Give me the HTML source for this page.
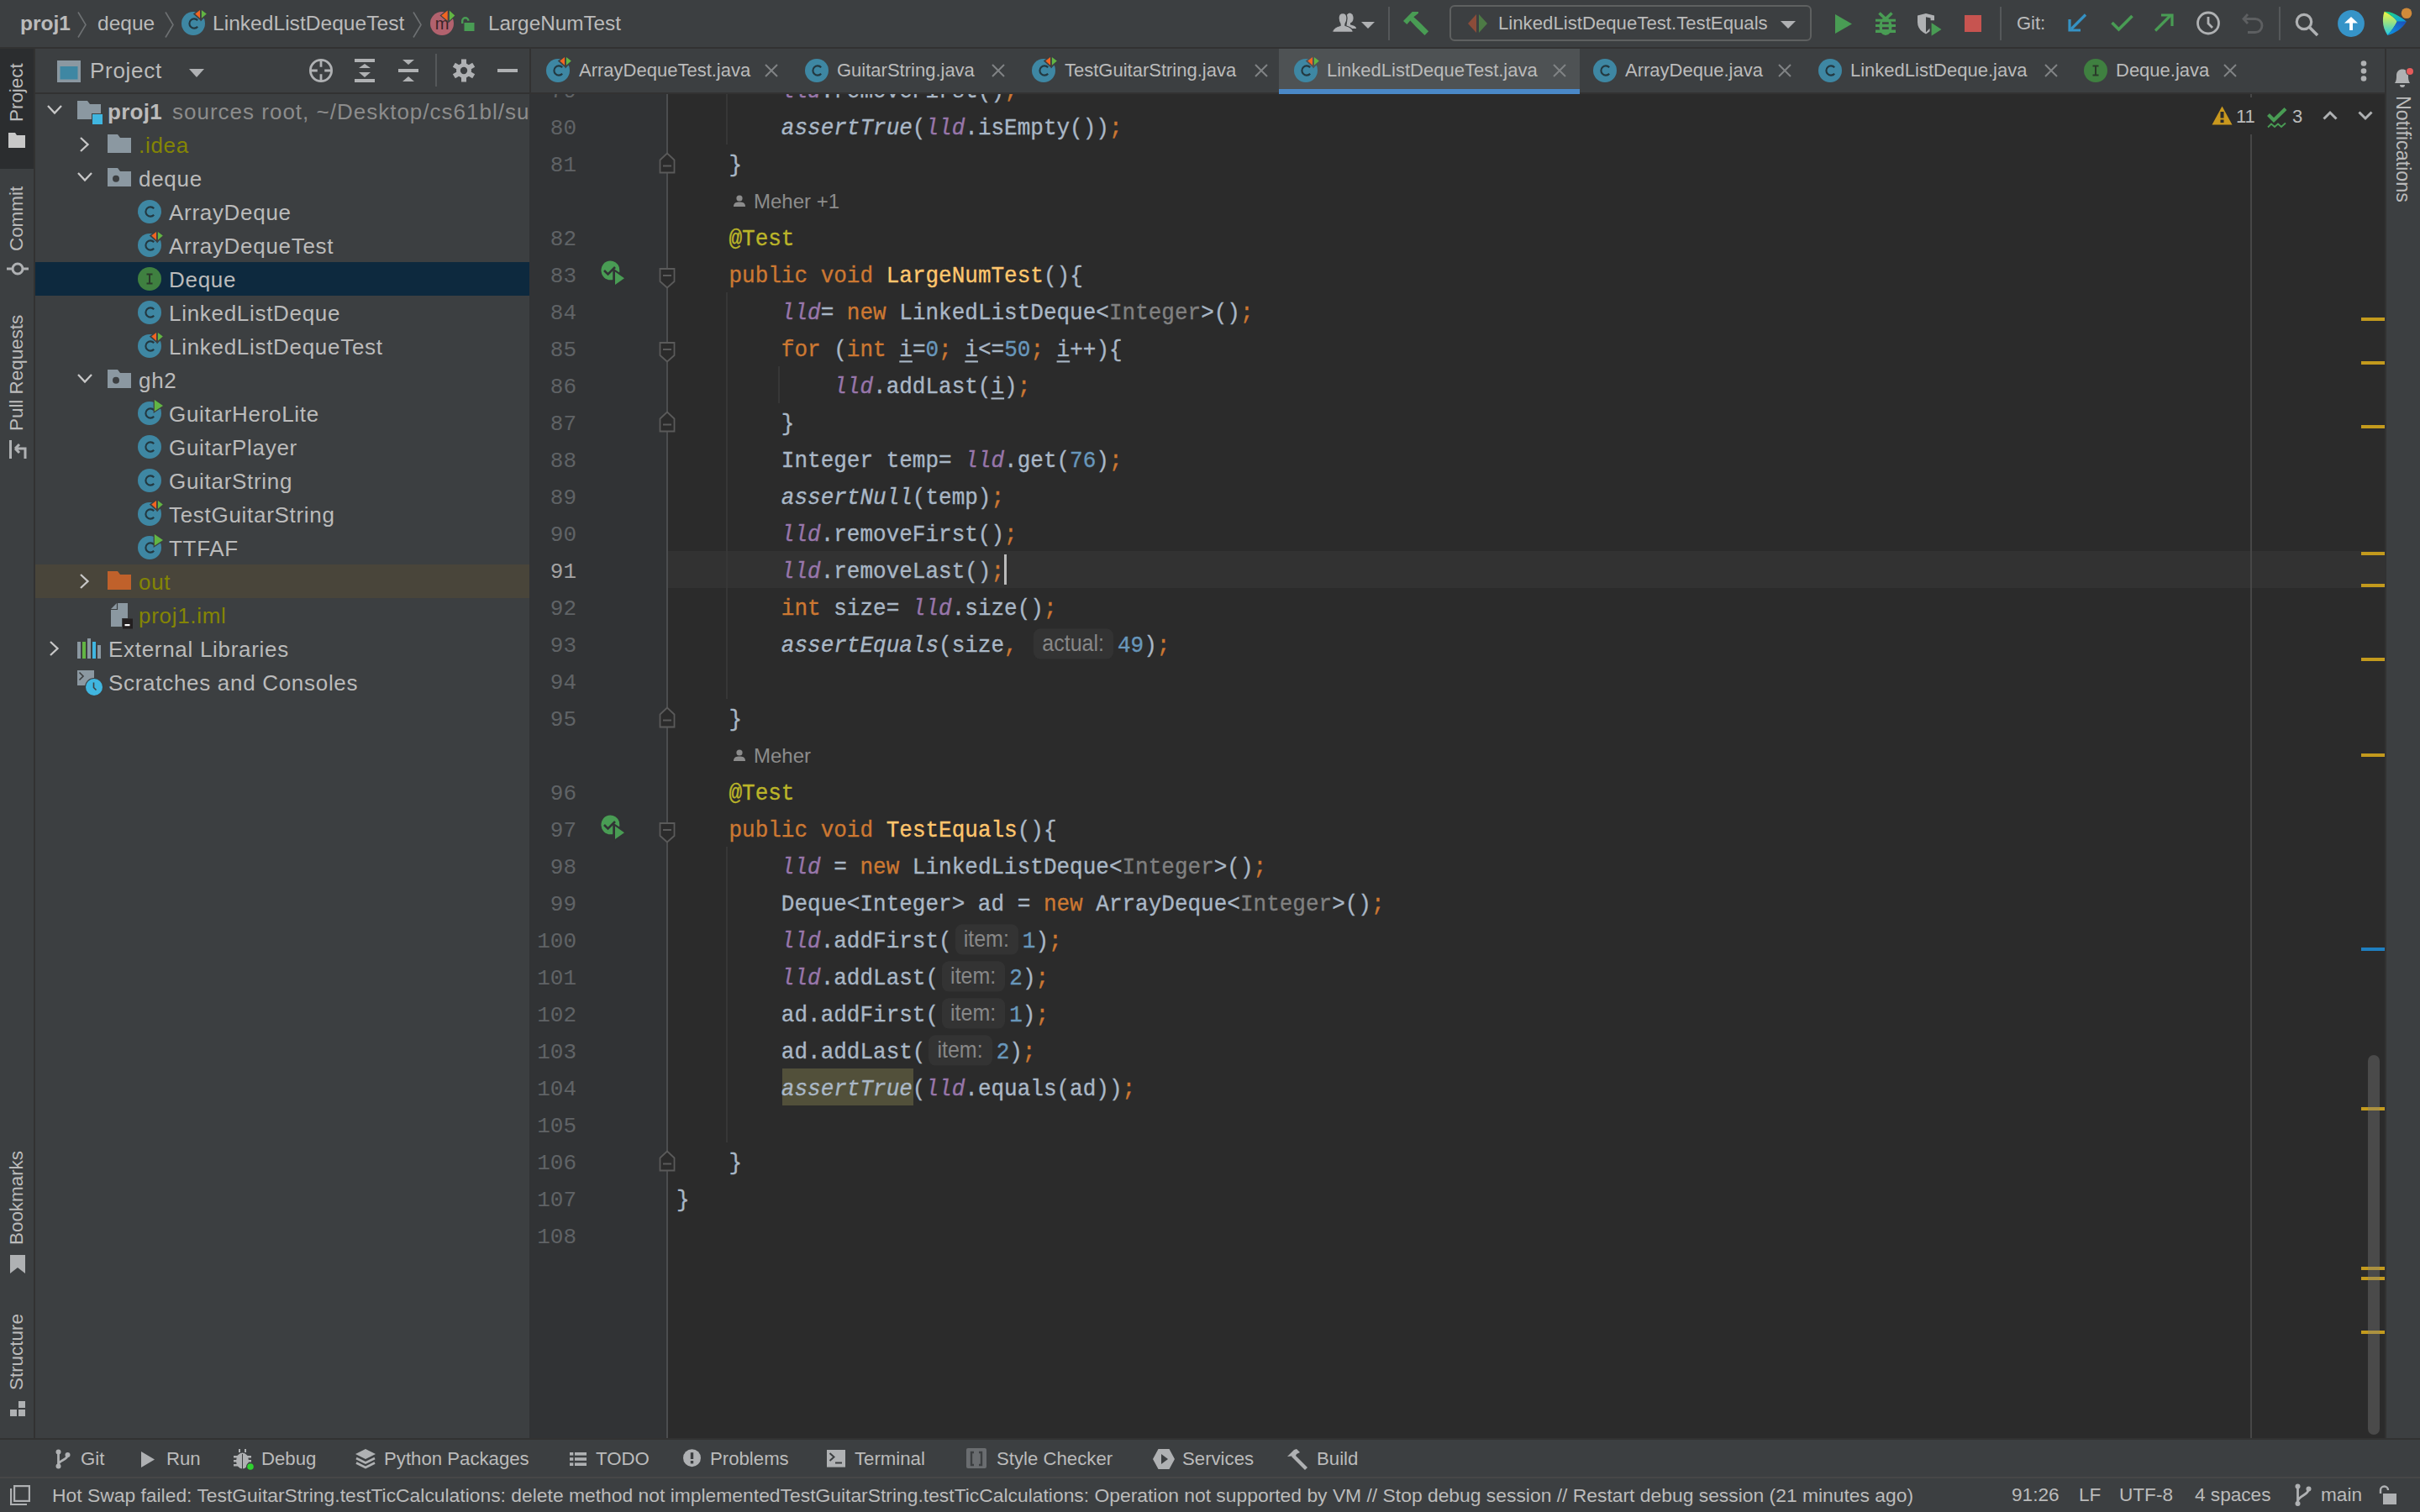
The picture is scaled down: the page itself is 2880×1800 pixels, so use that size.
<!DOCTYPE html>
<html><head><meta charset="utf-8">
<style>
*{margin:0;padding:0;box-sizing:border-box}
html,body{width:2880px;height:1800px;overflow:hidden;background:#3c3f41;font-family:"Liberation Sans",sans-serif;color:#bbbbbb}
.a{position:absolute}
.s{position:absolute;white-space:pre}
svg{position:absolute;overflow:visible}
/* regions */
#topbar{left:0;top:0;width:2880px;height:56px;background:#3c3f41}
#b1{left:0;top:56px;width:2880px;height:2px;background:#323232}
#lstrip{left:0;top:58px;width:40px;height:1654px;background:#3c3f41}
#lstripb{left:40px;top:58px;width:2px;height:1654px;background:#323232}
#psel{left:0;top:58px;width:40px;height:143px;background:#2b2d2f}
#panel{left:42px;top:58px;width:588px;height:1654px;background:#3c3f41}
#phb{left:42px;top:110px;width:588px;height:2px;background:#323232}
#pb{left:630px;top:58px;width:2px;height:52px;background:#323232}
#tabs{left:632px;top:58px;width:2206px;height:52px;background:#3c3f41}
#tabsb{left:630px;top:110px;width:2208px;height:2px;background:#323232}
#gutter{left:630px;top:112px;width:163px;height:1600px;background:#313335}
#foldl{left:793px;top:112px;width:2px;height:1600px;background:#4b4d4f}
#editor{left:795px;top:112px;width:2043px;height:1600px;background:#2b2b2b;overflow:hidden}
#nstrip{left:2838px;top:58px;width:42px;height:1654px;background:#3c3f41}
#nstripb{left:2838px;top:58px;width:2px;height:1654px;background:#323232}
#bb1{left:0;top:1712px;width:2880px;height:2px;background:#323232}
#btool{left:0;top:1714px;width:2880px;height:44px;background:#3c3f41}
#bb2{left:0;top:1758px;width:2880px;height:2px;background:#474747}
#status{left:0;top:1760px;width:2880px;height:40px;background:#3c3f41}

/* code */
.ln{position:absolute;left:632px;width:54px;text-align:right;font-family:"Liberation Mono",monospace;font-size:26px;line-height:44px;color:#606366;white-space:pre}
.cl{position:absolute;left:10px;font-family:"Liberation Mono",monospace;font-size:26px;line-height:44px;color:#a9b7c6;white-space:pre;-webkit-text-stroke:0.35px currentColor;transform:scaleY(1.07);transform-origin:0 29px}
.k{color:#cc7832}.n{color:#6897bb}.an{color:#bbb529}.md{color:#ffc66d}
.sf{color:#9876aa;font-style:italic}.it{font-style:italic}.g{color:#808080}
.u{text-decoration:underline;text-underline-offset:5px;text-decoration-thickness:2px}
.inl{-webkit-text-stroke:0;display:inline-block;font-family:"Liberation Sans",sans-serif;font-size:25px;color:#878787;background:#333333;border-radius:8px;height:34px;line-height:32px;vertical-align:top;margin-top:3px;padding:0 11px 0 10px;margin-left:4px;margin-right:5px;font-style:normal}
.tree{position:absolute;font-size:26px;letter-spacing:0.7px;line-height:40px;white-space:pre;color:#bbbbbb}
.tab{position:absolute;font-size:22px;line-height:51px;top:58px;white-space:pre;color:#bbbbbb}
.bt{position:absolute;font-size:22.2px;line-height:45px;top:1714px;white-space:pre;color:#bbbbbb}
.st{position:absolute;font-size:22.6px;line-height:40px;top:1760px;white-space:pre;color:#bbbbbb}
.vt{position:absolute;font-size:22.4px;white-space:pre;color:#bbbbbb;transform-origin:0 0}
</style></head><body>
<div id="topbar" class="a"></div>
<div id="b1" class="a"></div>
<div id="lstrip" class="a"></div>
<div id="psel" class="a"></div>
<div id="lstripb" class="a"></div>
<div id="panel" class="a"></div>
<div id="phb" class="a"></div>
<div id="pb" class="a"></div>
<div id="tabs" class="a"></div>
<div id="tabsb" class="a"></div>
<div id="gutter" class="a"></div>
<div id="foldl" class="a"></div>
<div id="editor" class="a">
<!--EDITOR-->
<div class="a" style="left:0;top:544px;width:2043px;height:44px;background:#323232"></div>
<div class="a" style="left:1883px;top:48px;width:2px;height:1560px;background:#474747"></div>
<div class="a" style="left:1883px;top:0px;width:2px;height:4px;background:#474747"></div>
<div class="a" style="left:69px;top:0;width:2px;height:60px;background:#373737"></div>
<div class="a" style="left:69px;top:236px;width:2px;height:484px;background:#373737"></div>
<div class="a" style="left:131px;top:324px;width:2px;height:44px;background:#373737"></div>
<div class="a" style="left:69px;top:896px;width:2px;height:352px;background:#373737"></div>
<div class="a" style="left:136px;top:1160px;width:156px;height:44px;background:#52503a"></div>
<div class="cl" style="top:-25.5px">        <span class="sf">lld</span>.removeFirst()<span class="k">;</span></div>
<div class="cl" style="top:18.5px">        <span class="it">assertTrue</span>(<span class="sf">lld</span>.isEmpty())<span class="k">;</span></div>
<div class="cl" style="top:62.5px">    }</div>
<div class="s" style="left:102px;top:106px;font-size:24px;line-height:44px;color:#8c8c8c">Meher +1</div>
<svg style="left:77px;top:119px" width="16" height="16" viewBox="0 0 16 16"><circle cx="8" cy="5" r="3.6" fill="#8c8c8c"/><path d="M1 15 C1 10.5 4 9.5 8 9.5 C12 9.5 15 10.5 15 15 Z" fill="#8c8c8c"/></svg>
<div class="cl" style="top:150.5px">    <span class="an">@Test</span></div>
<div class="cl" style="top:194.5px">    <span class="k">public</span> <span class="k">void</span> <span class="md">LargeNumTest</span>(){</div>
<div class="cl" style="top:238.5px">        <span class="sf">lld</span>= <span class="k">new</span> LinkedListDeque&lt;<span class="g">Integer</span>&gt;()<span class="k">;</span></div>
<div class="cl" style="top:282.5px">        <span class="k">for</span> (<span class="k">int</span> <span class="u">i</span>=<span class="n">0</span><span class="k">;</span> <span class="u">i</span>&lt;=<span class="n">50</span><span class="k">;</span> <span class="u">i</span>++){</div>
<div class="cl" style="top:326.5px">            <span class="sf">lld</span>.addLast(<span class="u">i</span>)<span class="k">;</span></div>
<div class="cl" style="top:370.5px">        }</div>
<div class="cl" style="top:414.5px">        Integer temp= <span class="sf">lld</span>.get(<span class="n">76</span>)<span class="k">;</span></div>
<div class="cl" style="top:458.5px">        <span class="it">assertNull</span>(temp)<span class="k">;</span></div>
<div class="cl" style="top:502.5px">        <span class="sf">lld</span>.removeFirst()<span class="k">;</span></div>
<div class="cl" style="top:546.5px">        <span class="sf">lld</span>.removeLast()<span class="k">;</span></div>
<div class="cl" style="top:590.5px">        <span class="k">int</span> size= <span class="sf">lld</span>.size()<span class="k">;</span></div>
<div class="cl" style="top:634.5px">        <span class="it">assertEquals</span>(size<span class="k">,</span> <span class="inl">actual:</span><span class="n">49</span>)<span class="k">;</span></div>
<div class="cl" style="top:722.5px">    }</div>
<div class="s" style="left:102px;top:766px;font-size:24px;line-height:44px;color:#8c8c8c">Meher</div>
<svg style="left:77px;top:779px" width="16" height="16" viewBox="0 0 16 16"><circle cx="8" cy="5" r="3.6" fill="#8c8c8c"/><path d="M1 15 C1 10.5 4 9.5 8 9.5 C12 9.5 15 10.5 15 15 Z" fill="#8c8c8c"/></svg>
<div class="cl" style="top:810.5px">    <span class="an">@Test</span></div>
<div class="cl" style="top:854.5px">    <span class="k">public</span> <span class="k">void</span> <span class="md">TestEquals</span>(){</div>
<div class="cl" style="top:898.5px">        <span class="sf">lld</span> = <span class="k">new</span> LinkedListDeque&lt;<span class="g">Integer</span>&gt;()<span class="k">;</span></div>
<div class="cl" style="top:942.5px">        Deque&lt;Integer&gt; ad = <span class="k">new</span> ArrayDeque&lt;<span class="g">Integer</span>&gt;()<span class="k">;</span></div>
<div class="cl" style="top:986.5px">        <span class="sf">lld</span>.addFirst(<span class="inl">item:</span><span class="n">1</span>)<span class="k">;</span></div>
<div class="cl" style="top:1030.5px">        <span class="sf">lld</span>.addLast(<span class="inl">item:</span><span class="n">2</span>)<span class="k">;</span></div>
<div class="cl" style="top:1074.5px">        ad.addFirst(<span class="inl">item:</span><span class="n">1</span>)<span class="k">;</span></div>
<div class="cl" style="top:1118.5px">        ad.addLast(<span class="inl">item:</span><span class="n">2</span>)<span class="k">;</span></div>
<div class="cl" style="top:1162.5px">        <span class="it hl">assertTrue</span>(<span class="sf">lld</span>.equals(ad))<span class="k">;</span></div>
<div class="cl" style="top:1250.5px">    }</div>
<div class="cl" style="top:1294.5px">}</div>
<div class="a" style="left:400px;top:548px;width:3px;height:36px;background:#bbbbbb"></div>
<svg style="left:1837px;top:14px" width="25" height="23" viewBox="0 0 25 23"><path d="M12.5 0.5 L24.5 22.5 H0.5 Z" fill="#c9981e"/><rect x="10.5" y="7" width="4" height="7.5" fill="#2b2b2b"/><rect x="10.5" y="16.5" width="4" height="3.6" fill="#2b2b2b"/></svg>
<div class="s" style="left:1866px;top:10px;font-size:22px;line-height:34px;color:#bbbbbb">11</div>
<svg style="left:1903px;top:15px" width="24" height="26" viewBox="0 0 24 26"><path d="M1.5 9.5 L8 16 L22 2.5" fill="none" stroke="#499c54" stroke-width="4.2"/><path d="M1 24.5 L5 20.5 L9 24 L13 20.5 L17 24 L22 19.5" fill="none" stroke="#499c54" stroke-width="1.8"/></svg>
<div class="s" style="left:1933px;top:10px;font-size:22px;line-height:34px;color:#bbbbbb">3</div>
<svg style="left:1969px;top:20px" width="18" height="11" viewBox="0 0 18 11"><path d="M1.5 9.5 L9 2 L16.5 9.5" fill="none" stroke="#afb1b3" stroke-width="3"/></svg>
<svg style="left:2011px;top:20px" width="18" height="11" viewBox="0 0 18 11"><path d="M1.5 1.5 L9 9 L16.5 1.5" fill="none" stroke="#afb1b3" stroke-width="3"/></svg>
<div class="a" style="left:2015px;top:266px;width:28px;height:4px;background:#c39a1d"></div>
<div class="a" style="left:2015px;top:318px;width:28px;height:4px;background:#c39a1d"></div>
<div class="a" style="left:2015px;top:394px;width:28px;height:4px;background:#c39a1d"></div>
<div class="a" style="left:2015px;top:545px;width:28px;height:4px;background:#c39a1d"></div>
<div class="a" style="left:2015px;top:583px;width:28px;height:4px;background:#c39a1d"></div>
<div class="a" style="left:2015px;top:671px;width:28px;height:4px;background:#c39a1d"></div>
<div class="a" style="left:2015px;top:785px;width:28px;height:4px;background:#c39a1d"></div>
<div class="a" style="left:2015px;top:1206px;width:28px;height:4px;background:#c39a1d"></div>
<div class="a" style="left:2015px;top:1396px;width:28px;height:4px;background:#c39a1d"></div>
<div class="a" style="left:2015px;top:1408px;width:28px;height:4px;background:#c39a1d"></div>
<div class="a" style="left:2015px;top:1472px;width:28px;height:4px;background:#c39a1d"></div>
<div class="a" style="left:2015px;top:1016px;width:28px;height:4px;background:#1f7fc0"></div>
<div class="a" style="left:2023px;top:1144px;width:14px;height:452px;border-radius:7px;background:rgba(128,128,128,0.365)"></div>
<!--/EDITOR-->
</div>
<div id="nstrip" class="a"></div>
<div id="nstripb" class="a"></div>
<div id="bb1" class="a"></div>
<div id="btool" class="a"></div>
<div id="bb2" class="a"></div>
<div id="status" class="a"></div>
<div class="a" style="left:0;top:112px;width:830px;height:1600px;overflow:hidden"><div class="a" style="left:0;top:-112px;width:830px;height:1800px">
<!--LINENUMS-->
<div class="ln" style="top:87px">79</div>
<div class="ln" style="top:131px;color:#606366">80</div>
<div class="ln" style="top:175px;color:#606366">81</div>
<div class="ln" style="top:263px;color:#606366">82</div>
<div class="ln" style="top:307px;color:#606366">83</div>
<div class="ln" style="top:351px;color:#606366">84</div>
<div class="ln" style="top:395px;color:#606366">85</div>
<div class="ln" style="top:439px;color:#606366">86</div>
<div class="ln" style="top:483px;color:#606366">87</div>
<div class="ln" style="top:527px;color:#606366">88</div>
<div class="ln" style="top:571px;color:#606366">89</div>
<div class="ln" style="top:615px;color:#606366">90</div>
<div class="ln" style="top:659px;color:#a4a3a3">91</div>
<div class="ln" style="top:703px;color:#606366">92</div>
<div class="ln" style="top:747px;color:#606366">93</div>
<div class="ln" style="top:791px;color:#606366">94</div>
<div class="ln" style="top:835px;color:#606366">95</div>
<div class="ln" style="top:923px;color:#606366">96</div>
<div class="ln" style="top:967px;color:#606366">97</div>
<div class="ln" style="top:1011px;color:#606366">98</div>
<div class="ln" style="top:1055px;color:#606366">99</div>
<div class="ln" style="top:1099px;color:#606366">100</div>
<div class="ln" style="top:1143px;color:#606366">101</div>
<div class="ln" style="top:1187px;color:#606366">102</div>
<div class="ln" style="top:1231px;color:#606366">103</div>
<div class="ln" style="top:1275px;color:#606366">104</div>
<div class="ln" style="top:1319px;color:#606366">105</div>
<div class="ln" style="top:1363px;color:#606366">106</div>
<div class="ln" style="top:1407px;color:#606366">107</div>
<div class="ln" style="top:1451px;color:#606366">108</div>
<svg style="left:784px;top:181px" width="20" height="26" viewBox="0 0 20 26"><path d="M1.5 24.5 H18.5 V9.5 L10 1.5 L1.5 9.5 Z" fill="#2b2b2b" stroke="#5a5a5a" stroke-width="1.8"/><rect x="5" y="15.5" width="10" height="2" fill="#5a5a5a"/></svg>
<svg style="left:784px;top:489px" width="20" height="26" viewBox="0 0 20 26"><path d="M1.5 24.5 H18.5 V9.5 L10 1.5 L1.5 9.5 Z" fill="#2b2b2b" stroke="#5a5a5a" stroke-width="1.8"/><rect x="5" y="15.5" width="10" height="2" fill="#5a5a5a"/></svg>
<svg style="left:784px;top:841px" width="20" height="26" viewBox="0 0 20 26"><path d="M1.5 24.5 H18.5 V9.5 L10 1.5 L1.5 9.5 Z" fill="#2b2b2b" stroke="#5a5a5a" stroke-width="1.8"/><rect x="5" y="15.5" width="10" height="2" fill="#5a5a5a"/></svg>
<svg style="left:784px;top:1369px" width="20" height="26" viewBox="0 0 20 26"><path d="M1.5 24.5 H18.5 V9.5 L10 1.5 L1.5 9.5 Z" fill="#2b2b2b" stroke="#5a5a5a" stroke-width="1.8"/><rect x="5" y="15.5" width="10" height="2" fill="#5a5a5a"/></svg>
<svg style="left:784px;top:319px" width="20" height="25" viewBox="0 0 20 25"><path d="M1.5 1 H18.5 V16 L10 23.5 L1.5 16 Z" fill="#2b2b2b" stroke="#5a5a5a" stroke-width="1.8"/><rect x="5" y="8" width="10" height="2" fill="#5a5a5a"/></svg>
<svg style="left:784px;top:407px" width="20" height="25" viewBox="0 0 20 25"><path d="M1.5 1 H18.5 V16 L10 23.5 L1.5 16 Z" fill="#2b2b2b" stroke="#5a5a5a" stroke-width="1.8"/><rect x="5" y="8" width="10" height="2" fill="#5a5a5a"/></svg>
<svg style="left:784px;top:979px" width="20" height="25" viewBox="0 0 20 25"><path d="M1.5 1 H18.5 V16 L10 23.5 L1.5 16 Z" fill="#2b2b2b" stroke="#5a5a5a" stroke-width="1.8"/><rect x="5" y="8" width="10" height="2" fill="#5a5a5a"/></svg>
<svg style="left:715px;top:311px" width="30" height="30" viewBox="0 0 30 30"><path d="M22 8.5 A10.8 10.8 0 1 0 15 20.5" fill="#499c54"/><circle cx="11.5" cy="11.5" r="10.8" fill="#499c54"/><path d="M15.5 10.5 L30 20.3 L15.5 30 Z" fill="#313335" stroke="#313335" stroke-width="2.5"/><path d="M17 12.6 L28 20.3 L17 27.9 Z" fill="#499c54"/><path d="M4 11 L8.5 15.5 L17 7" fill="none" stroke="#313335" stroke-width="2.6"/></svg>
<svg style="left:715px;top:971px" width="30" height="30" viewBox="0 0 30 30"><path d="M22 8.5 A10.8 10.8 0 1 0 15 20.5" fill="#499c54"/><circle cx="11.5" cy="11.5" r="10.8" fill="#499c54"/><path d="M15.5 10.5 L30 20.3 L15.5 30 Z" fill="#313335" stroke="#313335" stroke-width="2.5"/><path d="M17 12.6 L28 20.3 L17 27.9 Z" fill="#499c54"/><path d="M4 11 L8.5 15.5 L17 7" fill="none" stroke="#313335" stroke-width="2.6"/></svg>
<!--/LINENUMS-->
</div></div>
<!--TREE-->
<div class="a" style="left:42px;top:312px;width:588px;height:40px;background:#0d293e"></div>
<div class="a" style="left:42px;top:672px;width:588px;height:40px;background:#49453a"></div>
<svg style="left:56px;top:125px" width="18" height="12" viewBox="0 0 18 12"><path d="M1 1 L9 9.5 L17 1" fill="none" stroke="#c8c8c8" stroke-width="2.3"/></svg>
<svg style="left:92px;top:120px" width="30" height="30" viewBox="0 0 30 30"><path d="M0 0 H12 L15 4 H28 V22 H0 Z" fill="#8b98a1"/><rect x="17" y="15" width="14" height="14" fill="#3c3f41"/><rect x="18" y="16" width="12" height="12" fill="#40b6e0"/></svg>
<div class="tree" style="left:128px;top:113px;"><b style="letter-spacing:0.3px">proj1</b></div>
<div class="tree" style="left:205px;top:113px;color:#8c8c8c;width:425px;overflow:hidden;letter-spacing:1px">sources root, ~/Desktop/cs61bl/su22</div>
<svg style="left:95px;top:163px" width="12" height="18" viewBox="0 0 12 18"><path d="M1 1 L9.5 9 L1 17" fill="none" stroke="#c8c8c8" stroke-width="2.3"/></svg>
<svg style="left:128px;top:160px" width="30" height="30" viewBox="0 0 30 30"><path d="M0 0 H12 L15 4 H28 V22 H0 Z" fill="#8b98a1"/></svg>
<div class="tree" style="left:165px;top:153px;color:#848504">.idea</div>
<svg style="left:92px;top:205px" width="18" height="12" viewBox="0 0 18 12"><path d="M1 1 L9 9.5 L17 1" fill="none" stroke="#c8c8c8" stroke-width="2.3"/></svg>
<svg style="left:128px;top:200px" width="30" height="30" viewBox="0 0 30 30"><path d="M0 0 H12 L15 4 H28 V22 H0 Z" fill="#8b98a1"/><circle cx="10" cy="12.8" r="4" fill="#3c3f41"/></svg>
<div class="tree" style="left:165px;top:193px;">deque</div>
<svg style="left:164px;top:238px" width="28" height="28" viewBox="0 0 28 28"><circle cx="14" cy="14" r="14" fill="#3e87a3"/><path d="M19.2 10.3 A5.6 5.6 0 1 0 19.2 17.7" fill="none" stroke="#233840" stroke-width="2.1"/></svg>
<div class="tree" style="left:201px;top:233px;">ArrayDeque</div>
<svg style="left:164px;top:278px" width="28" height="28" viewBox="0 0 28 28"><circle cx="14" cy="14" r="14" fill="#3e87a3"/><path d="M19.2 10.3 A5.6 5.6 0 1 0 19.2 17.7" fill="none" stroke="#233840" stroke-width="2.1"/><path d="M15.5 2.6 L22.5 -2.4 L22.5 8.9 Z" fill="#3c3f41" stroke="#3c3f41" stroke-width="2.2"/><path d="M23.8 -2.2 L30 2.6 L23.8 8.9 Z" fill="#3c3f41" stroke="#3c3f41" stroke-width="2.2"/><path d="M16.3 2.6 L22 -2 L22 7.7 Z" fill="#f26522"/><path d="M23.9 -2 L29.8 2.6 L23.9 7.7 Z" fill="#62b543"/></svg>
<div class="tree" style="left:201px;top:273px;">ArrayDequeTest</div>
<svg style="left:164px;top:318px" width="28" height="28" viewBox="0 0 28 28"><circle cx="14" cy="14" r="14" fill="#3f8040"/><path d="M10.5 8.6 H17.5 M14 8.6 V19.4 M10.5 19.4 H17.5" fill="none" stroke="#2a3a2a" stroke-width="2"/></svg>
<div class="tree" style="left:201px;top:313px;">Deque</div>
<svg style="left:164px;top:358px" width="28" height="28" viewBox="0 0 28 28"><circle cx="14" cy="14" r="14" fill="#3e87a3"/><path d="M19.2 10.3 A5.6 5.6 0 1 0 19.2 17.7" fill="none" stroke="#233840" stroke-width="2.1"/></svg>
<div class="tree" style="left:201px;top:353px;">LinkedListDeque</div>
<svg style="left:164px;top:398px" width="28" height="28" viewBox="0 0 28 28"><circle cx="14" cy="14" r="14" fill="#3e87a3"/><path d="M19.2 10.3 A5.6 5.6 0 1 0 19.2 17.7" fill="none" stroke="#233840" stroke-width="2.1"/><path d="M15.5 2.6 L22.5 -2.4 L22.5 8.9 Z" fill="#3c3f41" stroke="#3c3f41" stroke-width="2.2"/><path d="M23.8 -2.2 L30 2.6 L23.8 8.9 Z" fill="#3c3f41" stroke="#3c3f41" stroke-width="2.2"/><path d="M16.3 2.6 L22 -2 L22 7.7 Z" fill="#f26522"/><path d="M23.9 -2 L29.8 2.6 L23.9 7.7 Z" fill="#62b543"/></svg>
<div class="tree" style="left:201px;top:393px;">LinkedListDequeTest</div>
<svg style="left:92px;top:445px" width="18" height="12" viewBox="0 0 18 12"><path d="M1 1 L9 9.5 L17 1" fill="none" stroke="#c8c8c8" stroke-width="2.3"/></svg>
<svg style="left:128px;top:440px" width="30" height="30" viewBox="0 0 30 30"><path d="M0 0 H12 L15 4 H28 V22 H0 Z" fill="#8b98a1"/><circle cx="10" cy="12.8" r="4" fill="#3c3f41"/></svg>
<div class="tree" style="left:165px;top:433px;">gh2</div>
<svg style="left:164px;top:478px" width="28" height="28" viewBox="0 0 28 28"><circle cx="14" cy="14" r="14" fill="#3e87a3"/><path d="M19.2 10.3 A5.6 5.6 0 1 0 19.2 17.7" fill="none" stroke="#233840" stroke-width="2.1"/><path d="M19.8 -2 L30 5 L19.8 11.8 Z" fill="#3c3f41" stroke="#3c3f41" stroke-width="2.4"/><path d="M19.8 -2 L30 5 L19.8 11.8 Z" fill="#62b543"/></svg>
<div class="tree" style="left:201px;top:473px;">GuitarHeroLite</div>
<svg style="left:164px;top:518px" width="28" height="28" viewBox="0 0 28 28"><circle cx="14" cy="14" r="14" fill="#3e87a3"/><path d="M19.2 10.3 A5.6 5.6 0 1 0 19.2 17.7" fill="none" stroke="#233840" stroke-width="2.1"/></svg>
<div class="tree" style="left:201px;top:513px;">GuitarPlayer</div>
<svg style="left:164px;top:558px" width="28" height="28" viewBox="0 0 28 28"><circle cx="14" cy="14" r="14" fill="#3e87a3"/><path d="M19.2 10.3 A5.6 5.6 0 1 0 19.2 17.7" fill="none" stroke="#233840" stroke-width="2.1"/></svg>
<div class="tree" style="left:201px;top:553px;">GuitarString</div>
<svg style="left:164px;top:598px" width="28" height="28" viewBox="0 0 28 28"><circle cx="14" cy="14" r="14" fill="#3e87a3"/><path d="M19.2 10.3 A5.6 5.6 0 1 0 19.2 17.7" fill="none" stroke="#233840" stroke-width="2.1"/><path d="M15.5 2.6 L22.5 -2.4 L22.5 8.9 Z" fill="#3c3f41" stroke="#3c3f41" stroke-width="2.2"/><path d="M23.8 -2.2 L30 2.6 L23.8 8.9 Z" fill="#3c3f41" stroke="#3c3f41" stroke-width="2.2"/><path d="M16.3 2.6 L22 -2 L22 7.7 Z" fill="#f26522"/><path d="M23.9 -2 L29.8 2.6 L23.9 7.7 Z" fill="#62b543"/></svg>
<div class="tree" style="left:201px;top:593px;">TestGuitarString</div>
<svg style="left:164px;top:638px" width="28" height="28" viewBox="0 0 28 28"><circle cx="14" cy="14" r="14" fill="#3e87a3"/><path d="M19.2 10.3 A5.6 5.6 0 1 0 19.2 17.7" fill="none" stroke="#233840" stroke-width="2.1"/><path d="M19.8 -2 L30 5 L19.8 11.8 Z" fill="#3c3f41" stroke="#3c3f41" stroke-width="2.4"/><path d="M19.8 -2 L30 5 L19.8 11.8 Z" fill="#62b543"/></svg>
<div class="tree" style="left:201px;top:633px;">TTFAF</div>
<svg style="left:95px;top:683px" width="12" height="18" viewBox="0 0 12 18"><path d="M1 1 L9.5 9 L1 17" fill="none" stroke="#c8c8c8" stroke-width="2.3"/></svg>
<svg style="left:128px;top:680px" width="30" height="30" viewBox="0 0 30 30"><path d="M0 0 H12 L15 4 H28 V22 H0 Z" fill="#c0612b"/></svg>
<div class="tree" style="left:165px;top:673px;color:#848504">out</div>
<svg style="left:132px;top:718px" width="28" height="30" viewBox="0 0 28 30"><path d="M7 0 H20 V28 H0 V8 H7 Z" fill="#8b98a1"/><path d="M0 7 L7 0 V7 Z" fill="#8b98a1"/><path d="M0 7.5 H7.5 V0" fill="none" stroke="#3c3f41" stroke-width="1.2"/><rect x="13" y="18" width="14" height="14" fill="#3c3f41"/><rect x="14" y="18.5" width="12" height="12" fill="#231f20"/><rect x="16.5" y="25" width="6" height="2.2" fill="#fff"/></svg>
<div class="tree" style="left:165px;top:713px;color:#848504">proj1.iml</div>
<svg style="left:59px;top:763px" width="12" height="18" viewBox="0 0 12 18"><path d="M1 1 L9.5 9 L1 17" fill="none" stroke="#c8c8c8" stroke-width="2.3"/></svg>
<svg style="left:92px;top:760px" width="28" height="24" viewBox="0 0 28 24"><rect x="0" y="4" width="4" height="20" fill="#8b98a1"/><rect x="6" y="4" width="4" height="20" fill="#62b543"/><rect x="12" y="0" width="4" height="24" fill="#8b98a1"/><rect x="18" y="4" width="4" height="20" fill="#40b6e0"/><rect x="24" y="8" width="4" height="16" fill="#8b98a1"/></svg>
<div class="tree" style="left:129px;top:753px;">External Libraries</div>
<svg style="left:92px;top:798px" width="32" height="32" viewBox="0 0 32 32"><rect x="0" y="0" width="20" height="18" fill="#8b98a1"/><path d="M2.5 2.5 L7 7 L2.5 11.5" fill="none" stroke="#3c3f41" stroke-width="1.6"/><circle cx="20" cy="20" r="11" fill="#3c3f41"/><circle cx="20" cy="20" r="10" fill="#40b6e0"/><path d="M19.5 14.5 V20.5 L22.5 23.5" fill="none" stroke="#3c3f41" stroke-width="1.6"/></svg>
<div class="tree" style="left:129px;top:793px;">Scratches and Consoles</div>
<svg style="left:68px;top:72px" width="28" height="26" viewBox="0 0 28 26"><rect x="0" y="0" width="28" height="26" fill="#8b98a1"/><rect x="3.5" y="7" width="21" height="15.5" fill="#3e87a3"/></svg>
<div class="tree" style="left:107px;top:64px;">Project</div>
<svg style="left:225px;top:82px" width="18" height="10" viewBox="0 0 18 10"><path d="M0 0 H18 L9 10 Z" fill="#afb1b3"/></svg>
<svg style="left:368px;top:70px" width="28" height="28" viewBox="0 0 28 28"><circle cx="14" cy="14" r="12.6" fill="none" stroke="#afb1b3" stroke-width="2.8"/><path d="M14 1 V9.8 M14 18.2 V27 M1 14 H9.8 M18.2 14 H27" stroke="#afb1b3" stroke-width="2.8"/></svg>
<svg style="left:422px;top:70px" width="24" height="28" viewBox="0 0 24 28"><rect x="0" y="0" width="24" height="4" fill="#afb1b3"/><rect x="0" y="24" width="24" height="4" fill="#afb1b3"/><path d="M5 11 L12 6 L19 11 Z M5 16 L12 22 L19 16 Z" fill="#afb1b3"/></svg>
<svg style="left:474px;top:70px" width="24" height="28" viewBox="0 0 24 28"><rect x="0" y="12" width="24" height="4" fill="#afb1b3"/><path d="M5 1 H19 L12 7 Z M5 27 H19 L12 21 Z" fill="#afb1b3"/></svg>
<div class="a" style="left:518px;top:64px;width:2px;height:39px;background:#55585a"></div>
<svg style="left:540px;top:71px" width="24" height="26" viewBox="0 0 24 26"><g fill="#afb1b3"><circle cx="12" cy="13" r="9"/><rect x="9.0" y="-0.5" width="6" height="6" transform="rotate(0 12.0 2.5)"/><rect x="18.093266739736606" y="4.749999999999999" width="6" height="6" transform="rotate(60 21.093266739736606 7.749999999999999)"/><rect x="18.093266739736606" y="15.249999999999996" width="6" height="6" transform="rotate(120 21.093266739736606 18.249999999999996)"/><rect x="9.000000000000002" y="20.5" width="6" height="6" transform="rotate(180 12.000000000000002 23.5)"/><rect x="-0.09326673973660249" y="15.250000000000004" width="6" height="6" transform="rotate(240 2.9067332602633975 18.250000000000004)"/><rect x="-0.09326673973660604" y="4.749999999999999" width="6" height="6" transform="rotate(300 2.906733260263394 7.749999999999999)"/></g><circle cx="12" cy="13" r="4.2" fill="#3c3f41"/></svg>
<div class="a" style="left:592px;top:82px;width:24px;height:4px;background:#afb1b3"></div>
<div class="vt" style="left:7px;top:145px;font-size:22.4px;line-height:26px;transform:rotate(-90deg)">Project</div>
<svg style="left:10px;top:158px" width="20" height="18" viewBox="0 0 20 18"><path d="M0 0 H8 L10 3 H20 V18 H0 Z" fill="#c8c8c8"/></svg>
<div class="vt" style="left:7px;top:299px;font-size:22.4px;line-height:26px;transform:rotate(-90deg)">Commit</div>
<svg style="left:8px;top:311px" width="26" height="18" viewBox="0 0 26 18"><circle cx="13" cy="9" r="6" fill="none" stroke="#afb1b3" stroke-width="3"/><path d="M0 9 H7 M19 9 H26" stroke="#afb1b3" stroke-width="3"/></svg>
<div class="vt" style="left:7px;top:513px;font-size:22.4px;line-height:26px;transform:rotate(-90deg)">Pull Requests</div>
<svg style="left:11px;top:524px" width="22" height="22" viewBox="0 0 22 22"><rect x="0" y="0" width="3" height="22" fill="#afb1b3"/><path d="M19 22 V10 H7 M7 10 L12 5 M7 10 L12 15" fill="none" stroke="#afb1b3" stroke-width="3"/></svg>
<div class="vt" style="left:7px;top:1482px;font-size:22.4px;line-height:26px;transform:rotate(-90deg)">Bookmarks</div>
<svg style="left:12px;top:1494px" width="18" height="22" viewBox="0 0 18 22"><path d="M0 0 H18 V22 L9 15 L0 22 Z" fill="#afb1b3"/></svg>
<div class="vt" style="left:7px;top:1655px;font-size:22.4px;line-height:26px;transform:rotate(-90deg)">Structure</div>
<svg style="left:12px;top:1668px" width="18" height="18" viewBox="0 0 18 18"><rect x="10" y="0" width="8" height="8" fill="#afb1b3"/><rect x="0" y="10" width="8" height="8" fill="#afb1b3"/><rect x="10" y="10" width="8" height="8" fill="#afb1b3"/></svg>
<!--/TREE-->
<!--TABS-->
<!--TOP-->
<div class="s" style="left:24px;top:12px;font-size:24.5px;line-height:32px;color:#bbbbbb"><b>proj1</b></div>
<svg style="left:92px;top:14px" width="11" height="31" viewBox="0 0 11 31"><path d="M1 0.5 L10 15.5 L1 30.5" fill="none" stroke="#6e7173" stroke-width="1.6"/></svg>
<div class="s" style="left:116px;top:12px;font-size:24.5px;line-height:32px;color:#bbbbbb">deque</div>
<svg style="left:196px;top:14px" width="11" height="31" viewBox="0 0 11 31"><path d="M1 0.5 L10 15.5 L1 30.5" fill="none" stroke="#6e7173" stroke-width="1.6"/></svg>
<svg style="left:216px;top:14px" width="28" height="28" viewBox="0 0 28 28"><circle cx="14" cy="14" r="14" fill="#3e87a3"/><path d="M19.2 10.3 A5.6 5.6 0 1 0 19.2 17.7" fill="none" stroke="#233840" stroke-width="2.1"/><path d="M15.5 2.6 L22.5 -2.4 L22.5 8.9 Z" fill="#3c3f41" stroke="#3c3f41" stroke-width="2.2"/><path d="M23.8 -2.2 L30 2.6 L23.8 8.9 Z" fill="#3c3f41" stroke="#3c3f41" stroke-width="2.2"/><path d="M16.3 2.6 L22 -2 L22 7.7 Z" fill="#f26522"/><path d="M23.9 -2 L29.8 2.6 L23.9 7.7 Z" fill="#62b543"/></svg>
<div class="s" style="left:253px;top:12px;font-size:24.6px;line-height:32px;color:#bbbbbb">LinkedListDequeTest</div>
<svg style="left:491px;top:14px" width="11" height="31" viewBox="0 0 11 31"><path d="M1 0.5 L10 15.5 L1 30.5" fill="none" stroke="#6e7173" stroke-width="1.6"/></svg>
<svg style="left:512px;top:14px" width="28" height="28" viewBox="0 0 28 28"><circle cx="14" cy="14" r="14" fill="#b2626e"/><text x="14" y="20.5" text-anchor="middle" font-family="Liberation Sans" font-size="20" fill="#3a2428">m</text><path d="M13.2 4.6 L20.7 -1.6 L20.7 10.8 Z" fill="#3c3f41" stroke="#3c3f41" stroke-width="2.2"/><path d="M22.8 -1.6 L29.3 4.6 L22.8 10.8 Z" fill="#3c3f41" stroke="#3c3f41" stroke-width="2.2"/><path d="M13.2 4.6 L20.7 -1.6 L20.7 10.8 Z" fill="#f26522"/><path d="M22.8 -1.6 L29.3 4.6 L22.8 10.8 Z" fill="#62b543"/></svg>
<svg style="left:548px;top:20px" width="17" height="17" viewBox="0 0 17 17"><path d="M2.2 8 V4.8 A3.6 3.6 0 0 1 9.4 4.8" fill="none" stroke="#499c54" stroke-width="2.4"/><rect x="4.5" y="7" width="12" height="10" fill="#499c54"/></svg>
<div class="s" style="left:581px;top:12px;font-size:24.3px;line-height:32px;color:#bbbbbb">LargeNumTest</div>
<svg style="left:1585px;top:14px" width="30" height="26" viewBox="0 0 30 26"><g fill="#afb1b3"><ellipse cx="21.3" cy="7.5" rx="4.3" ry="6"/><path d="M18 12 H22 V15.5 C26 16.5 28.5 17 29 19.5 V20 H17 Z"/></g><g fill="#afb1b3" stroke="#3c3f41" stroke-width="1.3"><path d="M8 7.5 C8 3.5 10 1.5 13 1.5 C16 1.5 18 3.5 18 7.5 C18 11 17 13 16 14.5 V16.5 C21 18 25 19.5 25.5 24.5 H0.5 C1 19.5 5 18 10 16.5 V14.5 C9 13 8 11 8 7.5 Z"/></g></svg>
<svg style="left:1620px;top:26px" width="16" height="8" viewBox="0 0 16 8"><path d="M0 0 H16 L8 8 Z" fill="#afb1b3"/></svg>
<div class="a" style="left:1652px;top:8px;width:2px;height:40px;background:#55585a"></div>
<svg style="left:1670px;top:14px" width="31" height="29" viewBox="0 0 31 29"><path d="M0 11.1 L10.8 0.1 L18 0.1 L18 1.7 L12.4 6.2 L19.9 13 L30.1 23.2 L25.5 28 L15 17.8 L8.3 10.5 L4.3 15.1 Z" fill="#499c54"/></svg>
<div class="a" style="left:1725px;top:6px;width:431px;height:43px;border:2px solid #5e6060;border-radius:6px"></div>
<svg style="left:1747px;top:16px" width="24" height="24" viewBox="0 0 24 24"><path d="M10 1 L0 12 L10 23 Z" fill="#8b4c39"/><path d="M13 1 L23 12 L13 23 Z" fill="#4d7a45"/></svg>
<div class="s" style="left:1783px;top:12px;font-size:22.2px;line-height:32px;color:#bbbbbb">LinkedListDequeTest.TestEquals</div>
<svg style="left:2119px;top:25px" width="18" height="9" viewBox="0 0 18 9"><path d="M0 0 H18 L9 9 Z" fill="#afb1b3"/></svg>
<svg style="left:2184px;top:17px" width="20" height="23" viewBox="0 0 20 23"><path d="M0 0 L20 11.5 L0 23 Z" fill="#499c54"/></svg>
<svg style="left:2231px;top:13px" width="26" height="30" viewBox="0 0 26 30"><g fill="#499c54"><path d="M5.5 2.5 L13 9.5 L20.5 2.5" fill="none" stroke="#499c54" stroke-width="3.6"/><ellipse cx="13" cy="18.5" rx="7.6" ry="10.6"/><rect x="1" y="9.7" width="24" height="3"/><rect x="1" y="16" width="24" height="3"/><rect x="1" y="22.5" width="24" height="3.5"/></g><rect x="9" y="13.3" width="7.7" height="2.5" fill="#3c3f41"/><rect x="9" y="19.3" width="7.7" height="2.6" fill="#3c3f41"/></svg>
<svg style="left:2281px;top:14px" width="32" height="31" viewBox="0 0 32 31"><g fill="#afb1b3"><path d="M1 4.5 L11 2 V26.5 C5 23.5 1 19 1 12.5 Z"/><path d="M11 2 L21 4.5 V10.3 H16.6 V7.6 L11 6.3 Z"/><path d="M11 24.5 L15.5 19.8 V23.3 C14 24.6 12.5 25.8 11 26.5 Z"/></g><path d="M17 12 L30.6 20.9 L17 29.7 Z" fill="#499c54" stroke="#3c3f41" stroke-width="1.2"/></svg>
<div class="a" style="left:2338px;top:18px;width:20px;height:20px;background:#c75450"></div>
<div class="a" style="left:2380px;top:8px;width:2px;height:40px;background:#55585a"></div>
<div class="s" style="left:2400px;top:12px;font-size:22px;line-height:32px;color:#bbbbbb">Git:</div>
<svg style="left:2461px;top:16px" width="23" height="22" viewBox="0 0 23 22"><path d="M21 1.5 L4 18.5" stroke="#3592c4" stroke-width="3.2"/><path d="M2 7 V20 H15" fill="none" stroke="#3592c4" stroke-width="3.2"/></svg>
<svg style="left:2512px;top:17px" width="27" height="20" viewBox="0 0 27 20"><path d="M1.5 10 L9.5 18 L25.5 2" fill="none" stroke="#499c54" stroke-width="3.6"/></svg>
<svg style="left:2563px;top:16px" width="24" height="22" viewBox="0 0 24 22"><path d="M2 20.5 L20 2.5" stroke="#499c54" stroke-width="3.2"/><path d="M9 2 H22 V15" fill="none" stroke="#499c54" stroke-width="3.2"/></svg>
<svg style="left:2614px;top:13px" width="28" height="29" viewBox="0 0 28 29"><circle cx="14" cy="14.5" r="12.5" fill="none" stroke="#afb1b3" stroke-width="2.8"/><path d="M14 7 V15 L19 20" fill="none" stroke="#afb1b3" stroke-width="2.8"/></svg>
<svg style="left:2668px;top:15px" width="26" height="27" viewBox="0 0 26 27"><path d="M7 2 L2 7.5 L7 13" fill="none" stroke="#5d5f61" stroke-width="2.8"/><path d="M2.5 7.5 H16 A8 8 0 0 1 16 23.5 H7" fill="none" stroke="#5d5f61" stroke-width="2.8"/></svg>
<div class="a" style="left:2712px;top:8px;width:2px;height:40px;background:#55585a"></div>
<svg style="left:2731px;top:15px" width="30" height="28" viewBox="0 0 30 28"><circle cx="11" cy="11" r="8.7" fill="none" stroke="#afb1b3" stroke-width="3.2"/><path d="M17.5 17.5 L27 27" stroke="#afb1b3" stroke-width="3.6"/></svg>
<svg style="left:2782px;top:12px" width="32" height="32" viewBox="0 0 32 32"><circle cx="16" cy="16" r="15.9" fill="#3694c8"/><path d="M8 15.6 L16 7.9 L24 15.6 Z" fill="#fff"/><rect x="14.1" y="15" width="3.9" height="9" fill="#fff"/></svg>
<svg style="left:2835px;top:12px" width="37" height="33" viewBox="0 0 37 33"><defs><linearGradient id="jbA" x1="0" y1="0" x2="0" y2="1"><stop offset="0" stop-color="#f5f53f"/><stop offset="0.5" stop-color="#8ee08a"/><stop offset="1" stop-color="#1ec8e8"/></linearGradient><linearGradient id="jbB" x1="0" y1="0" x2="1" y2="1"><stop offset="0" stop-color="#21e070"/><stop offset="1" stop-color="#0a96f0"/></linearGradient><linearGradient id="jbC" x1="1" y1="0" x2="0" y2="1"><stop offset="0" stop-color="#1d4db8"/><stop offset="1" stop-color="#0a9ae8"/></linearGradient></defs><path d="M2.7 1.8 C9 5 15 9 17.7 13.8 C15 19 11 25 6.4 30 C3 25 0.9 19 0.9 13 C0.9 8 1.5 4.5 2.7 1.8 Z" fill="url(#jbA)"/><path d="M2.7 1.8 C10 1.5 20 6 28.9 13.8 H17.7 C15 9 9 5 2.7 1.8 Z" fill="url(#jbB)"/><path d="M17.7 13.8 H28.9 C24 22 15 28 6.4 30 C11 25 15 19 17.7 13.8 Z" fill="url(#jbC)"/><circle cx="29" cy="3.8" r="6.8" fill="#3c3f41"/><circle cx="29" cy="3.8" r="6.3" fill="#d08a3a"/></svg>
<div class="a" style="left:1522px;top:58px;width:358px;height:48px;background:#4e5254"></div>
<div class="a" style="left:1522px;top:106px;width:358px;height:6px;background:#4a88c7"></div>
<svg style="left:650px;top:70px" width="28" height="28" viewBox="0 0 28 28"><circle cx="14" cy="14" r="14" fill="#3e87a3"/><path d="M19.2 10.3 A5.6 5.6 0 1 0 19.2 17.7" fill="none" stroke="#233840" stroke-width="2.1"/><path d="M15.5 2.6 L22.5 -2.4 L22.5 8.9 Z" fill="#3c3f41" stroke="#3c3f41" stroke-width="2.2"/><path d="M23.8 -2.2 L30 2.6 L23.8 8.9 Z" fill="#3c3f41" stroke="#3c3f41" stroke-width="2.2"/><path d="M16.3 2.6 L22 -2 L22 7.7 Z" fill="#f26522"/><path d="M23.9 -2 L29.8 2.6 L23.9 7.7 Z" fill="#62b543"/></svg>
<div class="tab" style="left:689px;top:58px">ArrayDequeTest.java</div>
<svg style="left:910px;top:76px" width="16" height="16" viewBox="0 0 16 16"><path d="M1 1 L15 15 M15 1 L1 15" stroke="#808385" stroke-width="2"/></svg>
<svg style="left:958px;top:70px" width="28" height="28" viewBox="0 0 28 28"><circle cx="14" cy="14" r="14" fill="#3e87a3"/><path d="M19.2 10.3 A5.6 5.6 0 1 0 19.2 17.7" fill="none" stroke="#233840" stroke-width="2.1"/></svg>
<div class="tab" style="left:996px;top:58px">GuitarString.java</div>
<svg style="left:1180px;top:76px" width="16" height="16" viewBox="0 0 16 16"><path d="M1 1 L15 15 M15 1 L1 15" stroke="#808385" stroke-width="2"/></svg>
<svg style="left:1228px;top:70px" width="28" height="28" viewBox="0 0 28 28"><circle cx="14" cy="14" r="14" fill="#3e87a3"/><path d="M19.2 10.3 A5.6 5.6 0 1 0 19.2 17.7" fill="none" stroke="#233840" stroke-width="2.1"/><path d="M15.5 2.6 L22.5 -2.4 L22.5 8.9 Z" fill="#3c3f41" stroke="#3c3f41" stroke-width="2.2"/><path d="M23.8 -2.2 L30 2.6 L23.8 8.9 Z" fill="#3c3f41" stroke="#3c3f41" stroke-width="2.2"/><path d="M16.3 2.6 L22 -2 L22 7.7 Z" fill="#f26522"/><path d="M23.9 -2 L29.8 2.6 L23.9 7.7 Z" fill="#62b543"/></svg>
<div class="tab" style="left:1267px;top:58px">TestGuitarString.java</div>
<svg style="left:1493px;top:76px" width="16" height="16" viewBox="0 0 16 16"><path d="M1 1 L15 15 M15 1 L1 15" stroke="#808385" stroke-width="2"/></svg>
<svg style="left:1540px;top:70px" width="28" height="28" viewBox="0 0 28 28"><circle cx="14" cy="14" r="14" fill="#3e87a3"/><path d="M19.2 10.3 A5.6 5.6 0 1 0 19.2 17.7" fill="none" stroke="#233840" stroke-width="2.1"/><path d="M15.5 2.6 L22.5 -2.4 L22.5 8.9 Z" fill="#4e5254" stroke="#4e5254" stroke-width="2.2"/><path d="M23.8 -2.2 L30 2.6 L23.8 8.9 Z" fill="#4e5254" stroke="#4e5254" stroke-width="2.2"/><path d="M16.3 2.6 L22 -2 L22 7.7 Z" fill="#f26522"/><path d="M23.9 -2 L29.8 2.6 L23.9 7.7 Z" fill="#62b543"/></svg>
<div class="tab" style="left:1579px;top:58px">LinkedListDequeTest.java</div>
<svg style="left:1848px;top:76px" width="16" height="16" viewBox="0 0 16 16"><path d="M1 1 L15 15 M15 1 L1 15" stroke="#808385" stroke-width="2"/></svg>
<svg style="left:1896px;top:70px" width="28" height="28" viewBox="0 0 28 28"><circle cx="14" cy="14" r="14" fill="#3e87a3"/><path d="M19.2 10.3 A5.6 5.6 0 1 0 19.2 17.7" fill="none" stroke="#233840" stroke-width="2.1"/></svg>
<div class="tab" style="left:1934px;top:58px">ArrayDeque.java</div>
<svg style="left:2116px;top:76px" width="16" height="16" viewBox="0 0 16 16"><path d="M1 1 L15 15 M15 1 L1 15" stroke="#808385" stroke-width="2"/></svg>
<svg style="left:2164px;top:70px" width="28" height="28" viewBox="0 0 28 28"><circle cx="14" cy="14" r="14" fill="#3e87a3"/><path d="M19.2 10.3 A5.6 5.6 0 1 0 19.2 17.7" fill="none" stroke="#233840" stroke-width="2.1"/></svg>
<div class="tab" style="left:2202px;top:58px">LinkedListDeque.java</div>
<svg style="left:2433px;top:76px" width="16" height="16" viewBox="0 0 16 16"><path d="M1 1 L15 15 M15 1 L1 15" stroke="#808385" stroke-width="2"/></svg>
<svg style="left:2480px;top:70px" width="28" height="28" viewBox="0 0 28 28"><circle cx="14" cy="14" r="14" fill="#3f8040"/><path d="M10.5 8.6 H17.5 M14 8.6 V19.4 M10.5 19.4 H17.5" fill="none" stroke="#2a3a2a" stroke-width="2"/></svg>
<div class="tab" style="left:2518px;top:58px">Deque.java</div>
<svg style="left:2646px;top:76px" width="16" height="16" viewBox="0 0 16 16"><path d="M1 1 L15 15 M15 1 L1 15" stroke="#808385" stroke-width="2"/></svg>
<svg style="left:2809px;top:72px" width="8" height="25" viewBox="0 0 8 25"><circle cx="4" cy="3.5" r="3.3" fill="#afb1b3"/><circle cx="4" cy="12.5" r="3.3" fill="#afb1b3"/><circle cx="4" cy="21.5" r="3.3" fill="#afb1b3"/></svg>
<svg style="left:2847px;top:80px" width="26" height="26" viewBox="0 0 26 26"><path d="M3 19 C5 16 5 13 5 10 C5 5 8 2.5 12 2.5 C16 2.5 19 5 19 10 C19 13 19 16 21 19 Z" fill="#afb1b3"/><path d="M9 21 A3 3 0 0 0 15 21" fill="#afb1b3"/><circle cx="21" cy="5" r="5" fill="#3c3f41"/><circle cx="21" cy="5" r="4" fill="#e55b5b"/></svg>
<div class="vt" style="left:2873px;top:114px;font-size:23.3px;line-height:26px;transform:rotate(90deg)">Notifications</div>
<!--/TOP-->
<!--BOTTOM-->
<svg style="left:66px;top:1725px" width="18" height="24" viewBox="0 0 18 24"><circle cx="3.5" cy="3.5" r="3" fill="#afb1b3"/><circle cx="3.5" cy="20.5" r="3" fill="#afb1b3"/><circle cx="14.5" cy="7" r="3" fill="#afb1b3"/><path d="M3.5 3.5 V20.5 M14.5 7 C14.5 13 5 13 3.5 18" fill="none" stroke="#afb1b3" stroke-width="2.8"/></svg>
<div class="bt" style="left:96px">Git</div>
<svg style="left:168px;top:1728px" width="16" height="19" viewBox="0 0 16 19"><path d="M0 0 L16 9.5 L0 19 Z" fill="#afb1b3"/></svg>
<div class="bt" style="left:198px">Run</div>
<svg style="left:278px;top:1725px" width="26" height="27" viewBox="0 0 26 27"><g fill="#afb1b3"><ellipse cx="10.5" cy="14" rx="7.5" ry="9.5"/><rect x="6" y="0" width="2" height="4"/><rect x="13" y="0" width="2" height="4"/><rect x="0" y="8" width="21" height="2.5"/><rect x="0" y="13" width="21" height="2.5"/><rect x="0" y="18" width="21" height="2.5"/></g><path d="M10.5 6 V24" stroke="#3c3f41" stroke-width="1"/><circle cx="20" cy="21" r="5" fill="#3c3f41"/><circle cx="20" cy="21" r="3.8" fill="#2fd12f"/></svg>
<div class="bt" style="left:311px">Debug</div>
<svg style="left:423px;top:1725px" width="24" height="24" viewBox="0 0 24 24"><path d="M12 0 L24 6 L12 12 L0 6 Z" fill="#afb1b3"/><path d="M1 11 L12 16.5 L23 11" fill="none" stroke="#afb1b3" stroke-width="2.6"/><path d="M1 16.5 L12 22 L23 16.5" fill="none" stroke="#afb1b3" stroke-width="2.6"/></svg>
<div class="bt" style="left:457px">Python Packages</div>
<svg style="left:678px;top:1728.5px" width="20" height="17" viewBox="0 0 20 17"><rect x="0" y="0" width="4.3" height="3.6" fill="#afb1b3"/><rect x="6" y="0" width="14" height="3.6" fill="#afb1b3"/><rect x="0" y="6.2" width="4.3" height="3.6" fill="#afb1b3"/><rect x="6" y="6.2" width="14" height="3.6" fill="#afb1b3"/><rect x="0" y="12.4" width="4.3" height="3.6" fill="#afb1b3"/><rect x="6" y="12.4" width="14" height="3.6" fill="#afb1b3"/></svg>
<div class="bt" style="left:709px">TODO</div>
<svg style="left:813px;top:1724.5px" width="22" height="22" viewBox="0 0 22 22"><circle cx="10.5" cy="10.7" r="10.5" fill="#afb1b3"/><rect x="8.8" y="4.2" width="3.4" height="7.8" fill="#3c3f41"/><rect x="8.8" y="14" width="3.4" height="3.4" fill="#3c3f41"/></svg>
<div class="bt" style="left:845px">Problems</div>
<svg style="left:984px;top:1725.5px" width="22" height="21" viewBox="0 0 22 21"><rect x="0" y="0" width="22" height="20.6" fill="#afb1b3"/><path d="M3.5 4 L8.5 8.5 L3.5 13" fill="none" stroke="#3c3f41" stroke-width="2"/><rect x="10" y="14.5" width="8" height="2" fill="#3c3f41"/></svg>
<div class="bt" style="left:1017px">Terminal</div>
<svg style="left:1150px;top:1724px" width="24" height="24" viewBox="0 0 24 24"><rect x="0" y="0" width="24" height="24" rx="2" fill="#6a6d70"/><path d="M9 5 H6 V20 H9 M15 5 H18 V20 H15" fill="none" stroke="#3c3f41" stroke-width="2.4"/></svg>
<div class="bt" style="left:1186px">Style Checker</div>
<svg style="left:1372px;top:1724px" width="26" height="26" viewBox="0 0 26 26"><path d="M6.5 1 H19.5 L26 13 L19.5 25 H6.5 L0 13 Z" fill="#afb1b3"/><path d="M10 7 L18 13 L10 19 Z" fill="#3c3f41"/></svg>
<div class="bt" style="left:1407px">Services</div>
<svg style="left:1532px;top:1725px" width="25" height="25" viewBox="0 0 25 25"><path d="M0 9 L8 1 L11 0 L15 4 L11 6 L10 8 Z" fill="#afb1b3"/><path d="M8 6 L24 22 L21 25 L5 9 Z" fill="#afb1b3"/></svg>
<div class="bt" style="left:1567px">Build</div>
<svg style="left:11px;top:1767px" width="27" height="27" viewBox="0 0 27 27"><rect x="6.1" y="2.1" width="17.8" height="17.8" fill="none" stroke="#afb1b3" stroke-width="2.2"/><path d="M2.1 5 V24 H21" fill="none" stroke="#afb1b3" stroke-width="2.2"/></svg>
<div class="st" style="left:62px;font-size:22.86px">Hot Swap failed: TestGuitarString.testTicCalculations: delete method not implementedTestGuitarString.testTicCalculations: Operation not supported by VM // Stop debug session // Restart debug session (21 minutes ago)</div>
<div class="st" style="left:2394px">91:26</div>
<div class="st" style="left:2474px">LF</div>
<div class="st" style="left:2522px">UTF-8</div>
<div class="st" style="left:2612px">4 spaces</div>
<svg style="left:2731px;top:1766px" width="20" height="28" viewBox="0 0 20 28"><circle cx="3.5" cy="3.5" r="3" fill="#afb1b3"/><circle cx="3.5" cy="24" r="3" fill="#afb1b3"/><circle cx="16.5" cy="6.5" r="3" fill="#afb1b3"/><path d="M3.5 3.5 V24 M16.5 6.5 C16.5 14 5 14 3.5 21" fill="none" stroke="#afb1b3" stroke-width="2.8"/></svg>
<div class="st" style="left:2762px">main</div>
<svg style="left:2830px;top:1768px" width="22" height="24" viewBox="0 0 22 24"><path d="M3 10 V6 A4.5 4.5 0 0 1 12 6" fill="none" stroke="#afb1b3" stroke-width="2.4"/><rect x="6" y="10" width="16" height="13" fill="#afb1b3"/></svg>
<!--/BOTTOM-->
</body></html>
